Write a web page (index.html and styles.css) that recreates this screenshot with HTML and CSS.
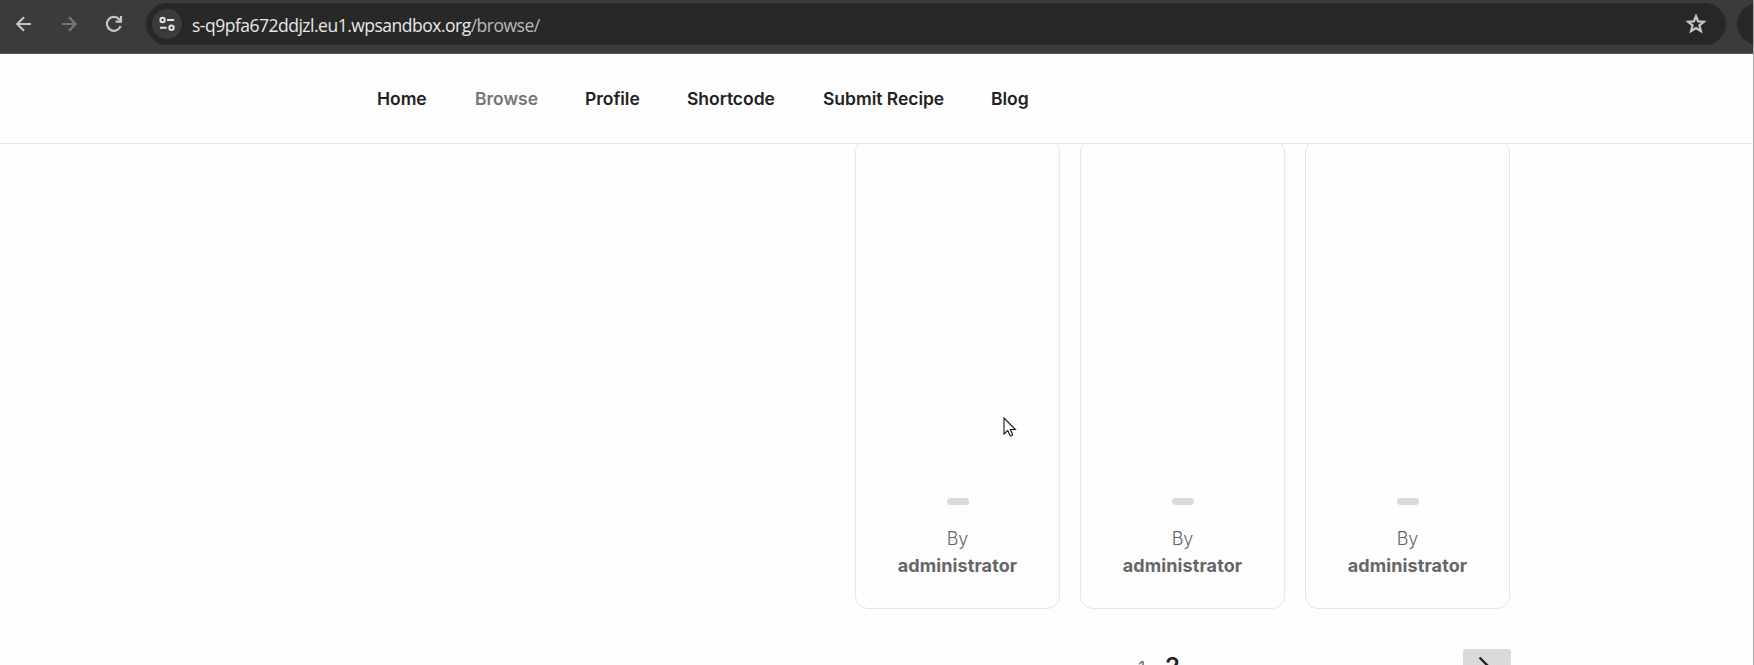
FILE: index.html
```html
<!DOCTYPE html>
<html lang="en">
<head>
<meta charset="utf-8">
<title>Browse</title>
<link rel="stylesheet" href="styles.css">
</head>
<body>
<div class="window">
  <header class="toolbar">
    <div class="controls">
      <svg width="16" height="16" viewBox="0 0 16 16" class="icon"><path d="M15 8H1.5M8 1.2L1.2 8L8 14.8"/></svg>
      <svg width="16" height="16" viewBox="0 0 16 16" class="icon icon-off"><path d="M1 8h13.5M8 1.2L14.8 8L8 14.8"/></svg>
      <svg width="18" height="18" viewBox="0 0 18 18" class="icon"><path d="M15.6 11A7 7 0 1 1 14.2 4.2L16 6.2"/><path d="M16 1v5.7h-5.4"/></svg>
    </div>
    <div class="address">
      <span class="site-info"><svg width="16" height="16" viewBox="0 0 16 16" class="icon icon-light"><circle cx="3.6" cy="4" r="2.2"/><path d="M8 4h7.2M1 11.8h6.6"/><circle cx="12.5" cy="11.8" r="2.2"/></svg></span>
      <span class="url">s-q9pfa672ddjzl.eu1.wpsandbox.org<span class="path">/browse/</span></span>
      <svg width="20" height="20" viewBox="0 0 20 20" class="icon star"><path d="M10 2.2l2.1 5.2 5.7.4-4.4 3.6 1.5 5.6L10 14l-4.9 3 1.500-5.600-4.400-3.600 5.700-.4z"/></svg>
    </div>
    <div class="extension"></div>
  </header>
  <nav class="menu">
    <a class="home">Home</a><a class="browse current">Browse</a><a class="profile">Profile</a><a class="shortcode">Shortcode</a><a class="submit">Submit Recipe</a><a class="blog">Blog</a>
  </nav>
  <main class="content">
    <div class="cards">
      <article class="card"><i class="dash"></i><p>By<br><b>administrator</b></p></article>
      <article class="card"><i class="dash"></i><p>By<br><b>administrator</b></p></article>
      <article class="card"><i class="dash"></i><p>By<br><b>administrator</b></p></article>
    </div>
    <div class="pagination">
      <span class="page">1</span><span class="page active">2</span>
      <span class="next"><svg width="16" height="22" viewBox="0 0 16 22"><path d="M1.500 1.500L11 11L1.500 20.500"/></svg></span>
    </div>
  </main>
  <svg class="cursor" width="14" height="21" viewBox="0 0 14 21"><path d="M1 1v16l3.700-3.500 2.500 5.200c1.500.5 2.500-.3 2.400-1.300L7.400 12.500h5z"/></svg>
</div>
</body>
</html>
```
FILE: styles.css
```css
* { box-sizing: border-box; }
body { margin: 0; overflow: hidden; }
.window {
  position: relative;
  display: flex;
  flex-direction: column;
  height: 665px;
  overflow: hidden;
  background: #fefefe;
  border-right: 1px solid #aaa;
}
.toolbar {
  display: flex;
  flex: none;
  height: 54px;
  padding-top: 3px;
  background: #3b3b3b;
  border-bottom: 1px solid #5a5a5a;
  overflow: hidden;
}
.controls {
  display: flex;
  flex: none;
  align-items: center;
  gap: 28.5px;
  width: 146px;
  height: 42px;
  padding-left: 16px;
}
.icon { flex: none; fill: none; stroke: #c7c7c7; stroke-width: 2.2; }
.icon-off { stroke: #777; }
.icon-light { stroke: #e3e3e3; stroke-width: 2; }
.address {
  display: flex;
  align-items: center;
  width: 1580px;
  flex: none;
  height: 42px;
  padding: 0 20px 0 6px;
  border-radius: 21px;
  background: #282828;
}
.site-info {
  display: flex;
  align-items: center;
  justify-content: center;
  width: 30px;
  height: 30px;
  margin-right: 10px;
  border-radius: 50%;
  background: #3b3b3b;
}
.url {
  flex: 1;
  padding-top: 1px;
  font: 17.5px/24px "Open Sans", "Noto Sans", sans-serif;
  letter-spacing: -0.5px;
  color: #e8e8e8;
}
.path { color: #bcbcbc; }
.extension {
  flex: none;
  width: 42px;
  height: 42px;
  margin-left: 11px;
  border-radius: 21px;
  background: #282828;
}
.menu {
  display: flex;
  flex: none;
  align-items: center;
  gap: 48px;
  height: 90px;
  padding: 1px 0 0 377px;
  border-bottom: 1px solid #e6e6e6;
  font: 600 17.5px/28px Inter, "Liberation Sans", sans-serif;
  letter-spacing: -0.03px;
  color: #222;
  white-space: nowrap;
}
.home { width: 50px; }
.browse { width: 62px; }
.profile { width: 54px; }
.shortcode { width: 88px; }
.submit { width: 120px; }
.blog { width: 39px; }
.current { color: #767676; }
.content {
  flex: 1;
  width: 656px;
  margin-left: 855px;
  overflow: hidden;
}
.cards { display: flex; gap: 20px; margin-top: -5px; }
.card {
  display: flex;
  flex-direction: column;
  align-items: center;
  justify-content: flex-end;
  width: 205px;
  height: 470px;
  padding-bottom: 29px;
  border: 1px solid #e6e6e6;
  border-radius: 13px;
}
.dash {
  width: 22px;
  height: 7px;
  margin-bottom: 20px;
  border-radius: 4px;
  background: #dadada;
}
.card p {
  margin: 0;
  font: 300 18px/27px Inter, "Liberation Sans", sans-serif;
  text-align: center;
  color: #666;
}
.card b { font-weight: 700; letter-spacing: 0.1px; }
.pagination {
  display: flex;
  margin-top: 40px;
  padding-left: 283px;
  font-family: Inter, "Liberation Sans", sans-serif;
}
.page { width: 27px; padding-top: 2px; font-size: 18px; line-height: 36px; color: #767676; }
.active { width: 298px; padding-top: 0; font-weight: 600; font-size: 24px; color: #222; }
.next {
  display: flex;
  justify-content: center;
  width: 48px;
  height: 48px;
  padding: 7px 2px 0 0;
  border-radius: 3px;
  background: #dadada;
}
.next svg { fill: none; stroke: #222; stroke-width: 2.4; }
.cursor { position: absolute; left: 1003px; top: 417px; fill: #fff; stroke: #15151f; stroke-width: 1.1; }
```
